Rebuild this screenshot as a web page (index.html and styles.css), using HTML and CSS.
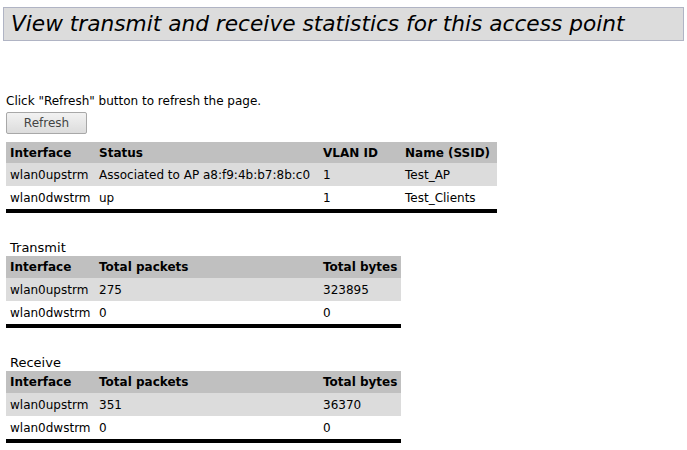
FILE: index.html
```
<!DOCTYPE html>
<html>
<head>
<meta charset="utf-8">
<link rel="stylesheet" href="styles.css">
</head>
<body>
<div class="title">View transmit and receive statistics for this access point</div>
<p class="hint">Click "Refresh" button to refresh the page.</p>
<button class="btn">Refresh</button>
<table class="grid t4">
  <colgroup><col class="c1"><col class="c2"><col class="c3"><col class="c4"></colgroup>
  <tr class="head"><th>Interface</th><th>Status</th><th>VLAN ID</th><th>Name (SSID)</th></tr>
  <tr class="odd"><td>wlan0upstrm</td><td>Associated to AP a8:f9:4b:b7:8b:c0</td><td>1</td><td>Test_AP</td></tr>
  <tr><td>wlan0dwstrm</td><td>up</td><td>1</td><td>Test_Clients</td></tr>
</table>
<div class="caption">Transmit</div>
<table class="grid t3">
  <colgroup><col class="c1"><col class="c2"><col class="c3"></colgroup>
  <tr class="head"><th>Interface</th><th>Total packets</th><th>Total bytes</th></tr>
  <tr class="odd"><td>wlan0upstrm</td><td>275</td><td>323895</td></tr>
  <tr><td>wlan0dwstrm</td><td>0</td><td>0</td></tr>
</table>
<div class="caption">Receive</div>
<table class="grid t3">
  <colgroup><col class="c1"><col class="c2"><col class="c3"></colgroup>
  <tr class="head"><th>Interface</th><th>Total packets</th><th>Total bytes</th></tr>
  <tr class="odd"><td>wlan0upstrm</td><td>351</td><td>36370</td></tr>
  <tr><td>wlan0dwstrm</td><td>0</td><td>0</td></tr>
</table>
</body>
</html>
```
FILE: styles.css
```
html, body { background: #fff; }
body {
  margin: 0;
  padding: 7px 3px 0 3px;
  font-family: "DejaVu Sans", Verdana, sans-serif;
  font-size: 12px;
  color: #000;
}
.title {
  background: #dcdcdc;
  border: 1px solid #b0b4c4;
  height: 32px;
  line-height: 32px;
  padding-left: 7px;
  font-style: italic;
  font-size: 21.7px;
}
.hint {
  margin: 53px 0 0 3px;
  line-height: 15px;
}
.btn {
  display: block;
  margin: 3px 0 0 3px;
  width: 81px;
  height: 22px;
  font-family: "DejaVu Sans", Verdana, sans-serif;
  font-size: 12px;
  color: #444;
  background: linear-gradient(#f2f2f2, #dcdcdc);
  border: 1px solid #a8a8a8;
  border-radius: 2px;
  padding: 0;
}
.grid {
  border-collapse: collapse;
  margin: 8px 0 0 3px;
  table-layout: fixed;
  border-bottom: 4px solid #000;
}
.t4 { width: 491px; }
.t3 { width: 395px; }
.c1 { width: 89px; }
.c2 { width: 224px; }
.c3 { width: 82px; }
.c4 { width: 96px; }
.grid th, .grid td {
  text-align: left;
  padding: 0 0 0 4px;
  height: 23px;
  white-space: nowrap;
}
.grid .head th { background: #c0c0c0; font-weight: bold; height: 21px; }
.t3 .head th { height: 22px; }
.grid .odd td { background: #dcdcdc; }
.caption {
  margin: 27px 0 0 7px;
  line-height: 15px;
  font-size: 13px;
}
.caption + .grid { margin-top: 1px; }
```
